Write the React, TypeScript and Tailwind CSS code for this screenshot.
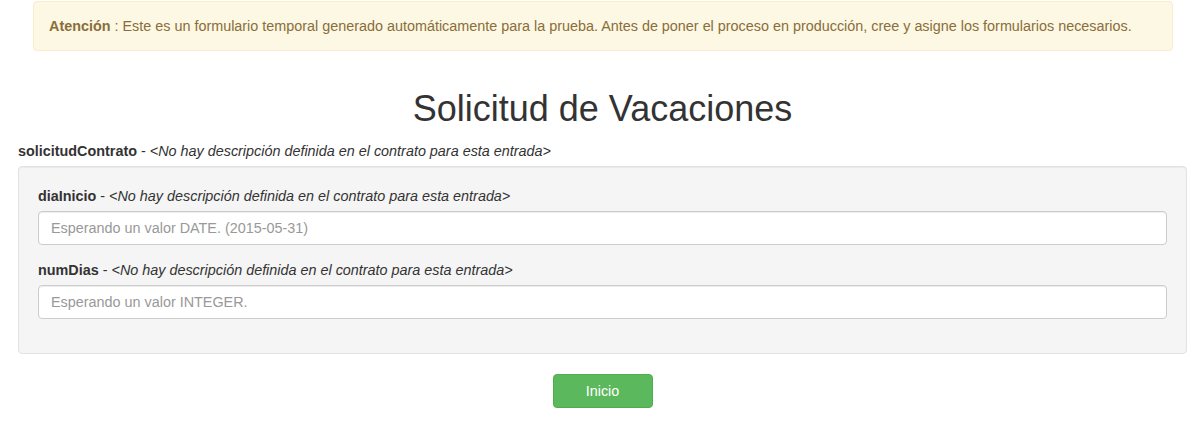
export default function App() {
  const desc = "<No hay descripción definida en el contrato para esta entrada>"
  return (
    <div className="min-h-[443px] bg-white pt-px text-[14.38px] leading-5 text-[#333]" style={{ fontFamily: '"Liberation Sans", Arial, sans-serif' }}>
      <div className="ml-[33px] w-[1140px] rounded border border-[#faebcc] bg-[#fcf8e3] px-[15px] py-[14px] text-[#8a6d3b]">
        <b>Atención</b> : Este es un formulario temporal generado automáticamente para la prueba. Antes de poner el proceso en producción, cree y asigne los formularios necesarios.
      </div>

      <div className="ml-[18px] mr-[16px] mt-[38px]">
        <h1 className="mb-[12px] text-center text-[36px] font-normal leading-[40px]">Solicitud de Vacaciones</h1>

        <div className="mb-[5px]">
          <b>solicitudContrato</b> - <i>{desc}</i>
        </div>

        <div className="mb-5 rounded border border-[#e3e3e3] bg-[#f5f5f5] p-[19px] shadow-[inset_0_1px_1px_rgba(0,0,0,0.05)]">
          <div className="mb-[15px]">
            <div className="mb-[5px]">
              <b>diaInicio</b> - <i>{desc}</i>
            </div>
            <input
              className="h-[34px] w-full rounded border border-[#ccc] bg-white px-3 text-[14.38px] text-[#555] shadow-[inset_0_1px_1px_rgba(0,0,0,0.075)] outline-none placeholder:text-[#999]"
              placeholder="Esperando un valor DATE. (2015-05-31)"
            />
          </div>
          <div className="mb-[15px]">
            <div className="mb-[5px]">
              <b>numDias</b> - <i>{desc}</i>
            </div>
            <input
              className="h-[34px] w-full rounded border border-[#ccc] bg-white px-3 text-[14.38px] text-[#555] shadow-[inset_0_1px_1px_rgba(0,0,0,0.075)] outline-none placeholder:text-[#999]"
              placeholder="Esperando un valor INTEGER."
            />
          </div>
        </div>

        <div className="flex justify-center">
          <button className="h-[34px] w-[100px] rounded border border-[#4cae4c] bg-[#5cb85c] text-[14.38px] text-white">Inicio</button>
        </div>
      </div>
    </div>
  )
}
